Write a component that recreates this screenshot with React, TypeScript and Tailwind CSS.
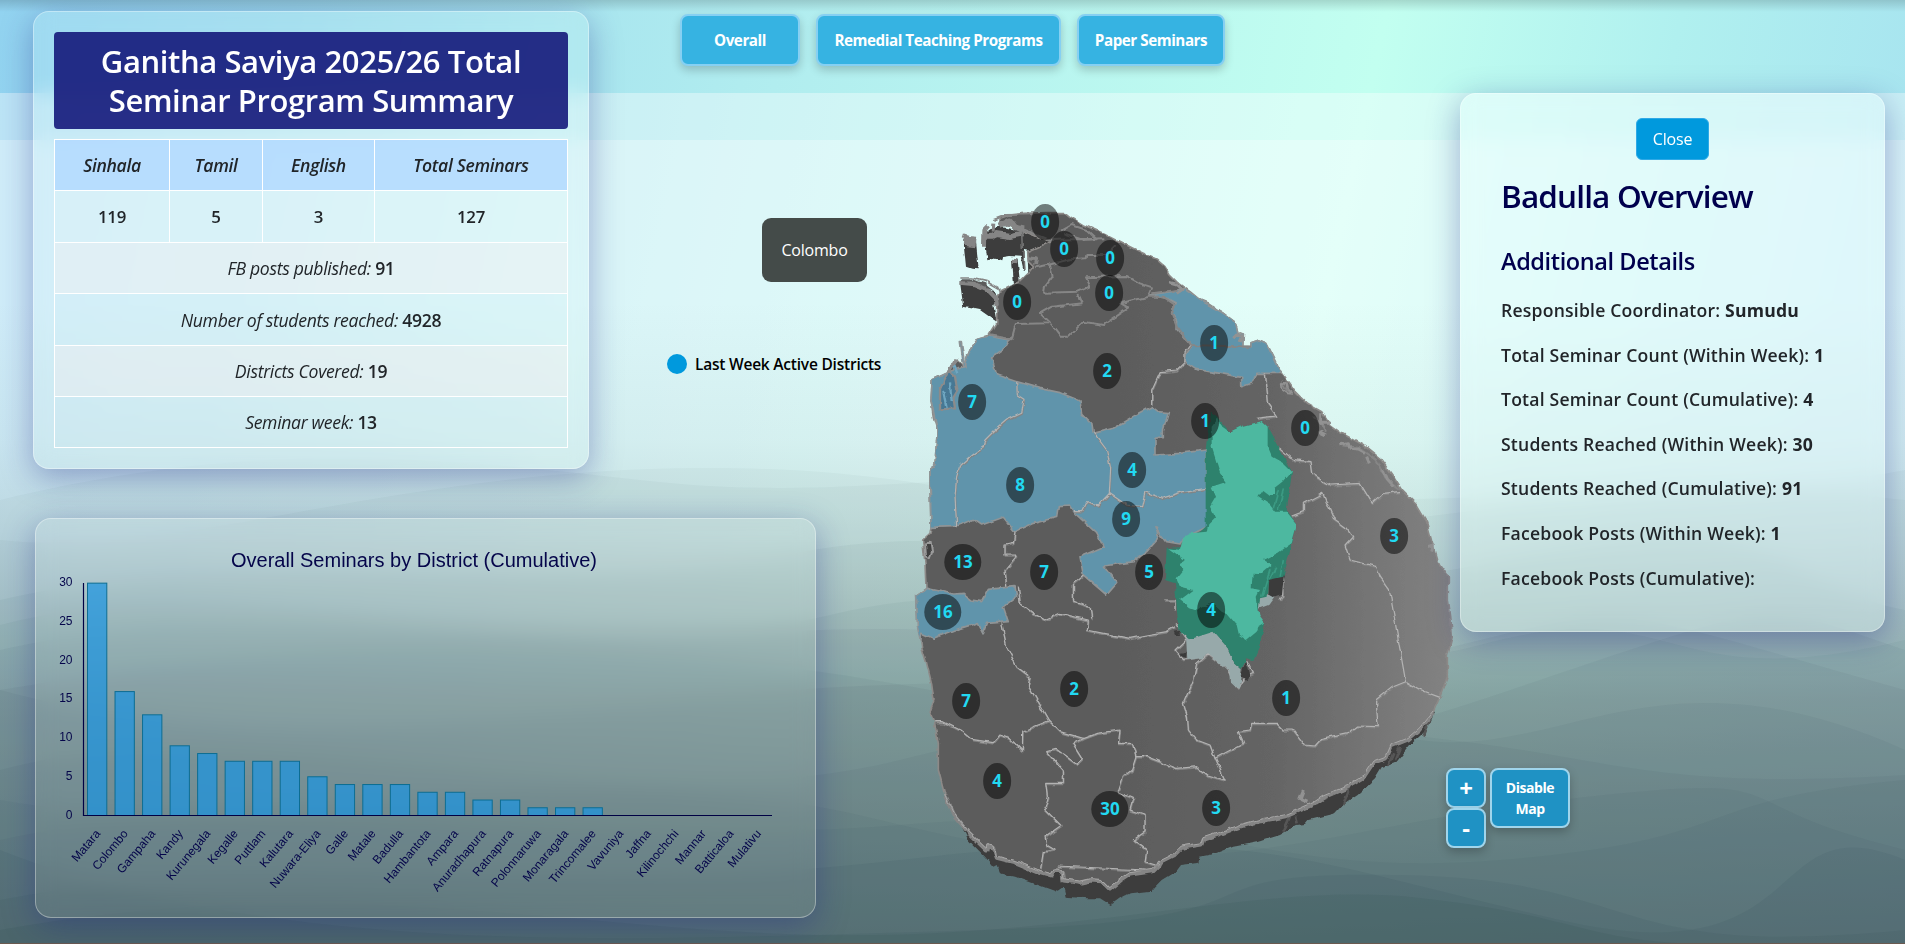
import React from "react";

const BARS: [string, number][] = [
  ["Matara", 30], ["Colombo", 16], ["Gampaha", 13], ["Kandy", 9], ["Kurunegala", 8],
  ["Kegalle", 7], ["Puttlam", 7], ["Kalutara", 7], ["Nuwara-Eliya", 5], ["Galle", 4],
  ["Matale", 4], ["Badulla", 4], ["Hambantota", 3], ["Ampara", 3], ["Anuradhapura", 2],
  ["Ratnapura", 2], ["Polonnaruwa", 1], ["Monaragala", 1], ["Trincomalee", 1], ["Vavuniya", 0],
  ["Jaffna", 0], ["Kilinochchi", 0], ["Mannar", 0], ["Batticaloa", 0], ["Mulativu", 0],
];

const BADGES: [string, number, number][] = [
  ["0", 1045, 222], ["0", 1064, 249], ["0", 1110, 258], ["0", 1017, 302], ["0", 1109, 293],
  ["2", 1107, 371], ["7", 972, 402], ["1", 1205, 421], ["1", 1214, 343], ["0", 1305, 428],
  ["3", 1394, 536], ["8", 1020, 485], ["4", 1132, 470], ["9", 1126, 519], ["13", 963, 562],
  ["7", 1044, 572], ["5", 1149, 572], ["16", 943, 612], ["4", 1211, 610], ["2", 1074, 689],
  ["7", 966, 701], ["4", 997, 781], ["30", 1110, 809], ["3", 1216, 808], ["1", 1286, 698],
];

const COAST =
  "M300 95 300 85 330 75 375 70 440 68 495 68 510 80 550 105 610 130 660 155 720 185 770 208 795 230 810 255 835 280 870 305 900 330 925 340 970 370 1010 400 1017 428 1030 432 1028 470 1053 470 1053 458 1077 450 1100 460 1120 500 1145 550 1185 605 1220 640 1265 665 1290 705 1325 730 1390 765 1440 805 1480 860 1505 900 1550 945 1580 995 1595 1050 1613 1110 1620 1125 1645 1160 1645 1230 1652 1280 1657 1340 1642 1400 1642 1460 1620 1520 1600 1565 1560 1615 1525 1645 1475 1665 1460 1700 1420 1715 1390 1760 1340 1790 1270 1820 1240 1840 1160 1875 1080 1890 1025 1905 970 1925 910 1945 905 1960 845 1970 820 1995 780 2015 775 2025 760 2040 690 2050 660 2070 630 2095 605 2070 570 2068 540 2075 490 2068 487 2045 468 2035 455 2053 410 2040 350 2015 290 2000 280 1970 262 1966 260 1978 210 1930 160 1870 135 1815 115 1740 115 1660 103 1595 90 1565 102 1530 95 1480 80 1420 65 1370 55 1310 50 1215 78 1195 75 1120 68 1050 90 1030 93 1010 90 900 90 835 105 825 112 720 100 680 93 630 97 570 150 545 170 510 190 530 210 480 235 445 268 435 290 400 290 345 285 330 300 305 360 275 385 250 400 230 385 215 383 185 440 160 450 155 375 125Z";

const WALL =
  "M1605 1565 1580 1620 1530 1665 1490 1715 1445 1732 1425 1765 1370 1815 1330 1842 1305 1870 1225 1890 1215 1902 1190 1905 1140 1935 1070 1957 1000 1970 950 1990 900 2000 895 2018 840 2025 825 2045 785 2070 765 2090 755 2102 690 2110 660 2125 632 2145 600 2125 560 2125 497 2120 490 2092 470 2105 400 2080 345 2060 300 2050 290 2025 280 2030 255 2000 205 1950 180 1900 150 1850 138 1820 300 1700 1300 1600Z";

const RIM =
  "M1600 1569 1560 1619 1525 1649 1475 1669 1460 1704 1420 1719 1390 1764 1340 1794 1270 1824 1240 1844 1160 1879 1080 1894 1025 1909 970 1929 910 1949 905 1964 845 1974 820 1999 780 2019 775 2029 760 2044 690 2054 660 2074 630 2099 605 2074 570 2072 540 2079 490 2072 487 2049 468 2039 455 2057 410 2044 350 2019 290 2004 280 1974 262 1970 260 1982 210 1934 160 1874 135 1819";

const ACTIVE = [
  "M235 445 268 438 330 450 320 468 275 500 290 555 350 575 420 595 480 608 540 632 545 670 575 700 580 730 640 715 690 685 755 650 775 665 805 668 790 720 790 740 765 745 765 795 840 790 918 780 922 1010 850 1045 840 1062 800 1055 765 1010 778 1042 740 1085 700 1115 610 1128 650 1180 620 1215 550 1155 540 1100 610 1070 590 1030 525 970 510 948 475 950 470 982 400 1000 345 1025 310 982 245 1005 220 988 165 1010 93 1012 90 835 105 825 112 720 93 630 97 570 150 545 190 530 210 480Z",
  "M750 315 810 305 850 295 900 330 970 370 1010 400 1017 430 1030 432 1028 470 1053 470 1053 458 1077 450 1100 460 1145 550 1070 550 1055 580 1025 590 1025 562 960 550 890 538 855 515 860 490 875 468 828 415 830 395 815 365 828 340 800 325Z",
  "M50 1215 80 1195 160 1212 190 1210 215 1230 245 1235 265 1198 345 1190 350 1220 310 1250 325 1295 260 1300 250 1328 235 1298 180 1315 100 1345 65 1330 62 1355 52 1310Z",
];

const BORDERS_NORTH =
  "M405 232 455 222 510 208 560 205 562 195 620 195 650 165M480 125 515 105 560 120 590 148 550 150 490 130M450 225 458 260 435 290 432 308 535 305 568 290 555 262 680 258 720 280 757 292 745 320 660 340 685 355 610 405 550 395 505 440 480 440 450 400 420 370 455 350 548 340 535 312M268 435 335 448 347 402 445 400M745 320 790 320 825 345 815 370 830 410 870 465 1053 470M757 310 830 300M280 90 320 75 400 73M300 95 375 120 450 150 610 145M1145 575 1160 600 1180 610M1325 765 1380 775 1430 810 1460 870 1500 900M1240 680 1262 700 1275 725";

const BORDERS =
  "M350 575 352 615 372 628 365 670 320 690 285 720 255 750 250 770 215 795 180 825 170 860 165 920 170 1010M580 730 590 740 620 780 632 835 628 910 595 945 560 935 545 965 525 965M628 910 680 945 725 950 735 905 785 925 850 905 918 895M870 465 855 485 855 515 830 540 780 545 755 600 755 640M1093 550 1102 640 1130 678 1070 685M1105 772 1140 775 1180 808 1230 815 1235 850 1290 885 1380 880 1417 940 1450 910 1500 905M1175 978 1210 965 1210 940 1268 910 1300 985 1335 1010 1358 1040 1335 1065 1350 1110 1430 1130 1440 1160 1468 1198 1517 1475 1560 1500 1620 1522M1517 1475 1480 1490 1430 1530 1430 1560 1435 1610 1370 1608 1345 1628 1265 1645 1245 1668 1215 1665 1180 1620 1150 1620 1130 1600 1055 1600 1050 1620 1015 1625 1030 1660 945 1705 930 1665 890 1650 865 1620 862 1580 850 1540 880 1470 890 1420 925 1390 965 1420 985 1440 1012 1497 1030 1465 1060 1450 1040 1410M945 1705 975 1770 920 1755 890 1730 830 1735 740 1700 705 1700M355 1190 360 1240 400 1270 435 1290 480 1270 565 1290 562 1320 610 1330 690 1345 740 1335 800 1325 825 1310M550 1155 520 1180 520 1230 570 1250 575 1285M345 1025 340 1060 315 1065 315 1095 352 1095 315 1140 320 1190M305 1300 320 1370 350 1430 390 1460 385 1485 445 1590 480 1625 550 1645M103 1595 130 1595 180 1620 215 1648 280 1658 300 1635 330 1645 367 1683 368 1623 445 1593M550 1645 590 1630 660 1620 655 1660 700 1660 710 1695 695 1740 670 1760 655 1805 700 1825 690 1860 735 1875 735 1925 700 1950 740 1980 735 2015 770 2025M550 1645 520 1660 548 1705 530 1723 465 1675 440 1682 490 1740 490 1780 440 1780 445 1820 435 1855 485 1905 435 1940 440 1965 465 1980 430 1985 422 2035M470 2028 740 2040M1140 1230 1148 1215 1148 1165M790 1230 825 1230 825 1260M828 1300 860 1345 825 1380 850 1408 900 1400";

const RAISED_SIDE =
  "M930 668 955 685 990 727 1030 707 1085 693 1103 710 1176 845 1160 960 1188 1000 1188 1015 1150 1160 1105 1170 1100 1220 1080 1225 1075 1275 1095 1298 1077 1370 1060 1410 1038 1405 1025 1438 1000 1415 980 1370 940 1325 870 1348 835 1320 825 1180 795 1170 800 1073 850 1072 917 1010 917 780Z";

const RAISED_TOP =
  "M955 685 960 705 990 727 1030 707 1085 693 1103 710 1103 772 1115 800 1150 820 1176 845 1150 875 1125 895 1125 915 1110 915 1090 900 1075 922 1110 945 1125 965 1160 965 1188 1000 1188 1015 1175 1060 1135 1088 1092 1110 1115 1125 1085 1150 1058 1148 1055 1195 1080 1200 1070 1220 1078 1275 1095 1298 1075 1310 1070 1325 1040 1350 1017 1335 1010 1305 985 1275 965 1265 935 1238 890 1262 870 1255 840 1230 880 1200 840 1190 830 1165 850 1140 838 1120 855 1110 805 1075 840 1080 850 1040 870 1030 920 1025 925 1000 945 980 930 950 948 920 935 890 980 875 960 850 935 770 935 710Z";

const WAVES: [string, number][] = [
  ["M0 500C250 440 420 455 640 480S960 460 1180 490 1640 470 1905 500V944H0Z", 0.03],
  ["M0 540C180 560 380 470 700 468S1100 560 1400 520 1750 500 1905 470V944H0Z", 0.03],
  ["M0 600C260 540 520 600 800 552S1200 630 1500 560 1750 580 1905 610V944H0Z", 0.045],
  ["M0 625C240 560 560 680 830 615S1280 700 1480 645 1660 700 1905 640V944H0Z", 0.045],
  ["M0 650C220 600 480 640 820 630S1240 700 1440 650 1600 605 1905 690V944H0Z", 0.05],
  ["M0 690C300 640 550 620 930 690S1300 760 1540 680 1760 600 1905 650V944H0Z", 0.05],
  ["M0 690C300 770 560 700 860 686S1280 720 1420 740 1660 640 1905 750V944H0Z", 0.05],
  ["M0 770C260 700 620 830 900 760S1280 720 1450 740 1660 790 1905 775V944H0Z", 0.05],
  ["M0 800C280 850 560 740 880 820S1300 830 1560 800 1700 800 1905 850V944H0Z", 0.05],
  ["M0 840C280 780 600 850 900 825S1250 880 1500 860 1680 800 1905 780V944H0Z", 0.05],
  ["M0 900C260 850 560 900 900 860S1300 860 1560 920 1760 800 1905 860V944H0Z", 0.07],
  ["M0 850C280 960 640 940 980 930S1150 870 1400 875 1600 960 1905 930V944H0Z", 0.07],
  ["M0 930C340 870 560 930 820 935S1260 880 1420 898 1580 940 1700 944H0Z", 0.09],
];

const DETAILS: [string, string][] = [
  ["Responsible Coordinator:", "Sumudu"],
  ["Total Seminar Count (Within Week):", "1"],
  ["Total Seminar Count (Cumulative):", "4"],
  ["Students Reached (Within Week):", "30"],
  ["Students Reached (Cumulative):", "91"],
  ["Facebook Posts (Within Week):", "1"],
  ["Facebook Posts (Cumulative):", ""],
];

const SUMMARY: [string, string, string][] = [
  ["FB posts published:", "91", "bg-[#fff0f0]/30"],
  ["Number of students reached:", "4928", ""],
  ["Districts Covered:", "19", "bg-[#fff0f0]/30"],
  ["Seminar week:", "13", ""],
];

function Backdrop() {
  return (
    <div className="absolute inset-0 overflow-hidden bg-[linear-gradient(102deg,#92d3f0_0%,#9cdaee_14%,#b0ecef_36%,#c2fff0_66%,#b0f0ef_80%,#a2ddf0_100%)]">
      <div className="absolute inset-x-0 top-[93px] bottom-0 bg-white/38" />
      <div className="absolute inset-x-0 top-[140px] bottom-0 bg-white/28" />
      <div className="absolute inset-0 bg-[linear-gradient(180deg,rgba(80,106,102,0)_300px,rgba(80,106,102,0.06)_440px,rgba(80,106,102,0.15)_520px,rgba(80,106,102,0.3)_620px,rgba(80,106,102,0.44)_700px,rgba(80,106,102,0.54)_800px,rgba(80,106,102,0.66)_944px)]" />
      <svg className="absolute inset-0" width="1905" height="944" viewBox="0 0 1905 944">
        {WAVES.map(([d, o], i) => (
          <path key={i} d={d} fill="#203f46" fillOpacity={o} />
        ))}
      </svg>
      <div className="absolute inset-x-0 top-0 h-3 bg-gradient-to-b from-black/15 to-transparent" />
      <div className="absolute inset-x-0 bottom-0 h-px bg-[#6a5a50]" />
    </div>
  );
}

function DistrictMap() {
  return (
    <div className="absolute inset-0">
      <svg className="absolute top-[190px] left-[900px]" width="600" height="740" viewBox="0 0 1800 2220">
        <defs>
          <linearGradient id="land" gradientUnits="userSpaceOnUse" x1="600" y1="0" x2="1660" y2="0">
            <stop offset="0" stopColor="#5b5b5b" />
            <stop offset="0.5" stopColor="#656565" />
            <stop offset="1" stopColor="#838383" />
          </linearGradient>
          <filter id="rough" x="-5%" y="-5%" width="110%" height="110%">
            <feTurbulence type="fractalNoise" baseFrequency="0.035" numOctaves="2" seed="4" />
            <feDisplacementMap in="SourceGraphic" scale="15" xChannelSelector="R" yChannelSelector="G" />
          </filter>
        </defs>
        <g filter="url(#rough)" strokeLinejoin="round">
          <g fill="#3c3c3c">
            <path d="M190 150 228 155 236 238 215 236 198 230Z" />
            <path d="M252 130 268 118 300 110 372 125 450 155 385 182 372 180 376 240 370 238 362 200 330 198 306 202 304 214 268 206 262 208Z" />
            <path d="M180 275 235 278 285 305 294 330 280 345 290 395 240 360 190 350Z" />
            <path d="M336 210 353 210 360 280 342 285Z" />
            <path d="M383 200 405 210 405 240 385 250Z" />
          </g>
          <path d={WALL} fill="#3d3d3d" />
          <path d="M1590 1590 1570 1640M1480 1690 1465 1725M1500 1670 1485 1710M1350 1790 1330 1842M1170 1880 1150 1925M1185 1880 1190 1900" stroke="#565656" strokeWidth="8" fill="none" />
          <path d={COAST} fill="url(#land)" stroke="#8d8a88" strokeWidth="5" />
          <path d={RIM} fill="none" stroke="#858585" strokeWidth="11" />
          <path d={RIM} fill="none" stroke="#adadad" strokeWidth="2.5" transform="translate(-1 -6)" />
          <g fill="none" stroke="#858585">
            <path strokeWidth="24" d="M190 155 228 160" />
            <path strokeWidth="12" d="M190 139 205 144 228 146M338 212 352 214M385 205 408 208 405 225M252 170 253 118 262 108M278 125 280 98" />
            <path strokeWidth="18" d="M256 140 275 140 290 132 330 138 370 130M300 108 330 92 345 112 372 118" />
            <path strokeWidth="13" d="M178 278 225 282 262 298 288 325 290 350" />
            <path strokeWidth="5" d="M178 264 215 264 260 275 295 295 298 308" />
            <path strokeWidth="5" d="M365 125 367 175M372 185 374 238" stroke="#707070" />
          </g>
          <path d="M182 268 215 268 255 280 285 302 262 292 225 276 184 274Z" fill="#5b5b5b" />
          <g fill="#6094ab" stroke="#8f9496" strokeWidth="5">
            {ACTIVE.map((d) => <path key={d} d={d} />)}
            <path d="M178 455 184 455 195 530 188 530Z" />
          </g>
          <path d={BORDERS_NORTH} fill="none" stroke="#868686" strokeWidth="6" />
          <path d={BORDERS} fill="none" stroke="#838383" strokeWidth="5" transform="translate(1 3)" />
          <path d={BORDERS} fill="none" stroke="#b3b3b3" strokeWidth="3.5" />
          <path d="M120 600 135 565 150 545 165 560 172 600 160 620 165 655 120 658Z" fill="#467894" stroke="#8b8b8b" strokeWidth="7" />
          <path d="M130 605 140 655M150 580 155 630M160 520 172 550" stroke="#6fa6c0" strokeWidth="7" />
          <path d="M145 548 152 530 165 520 168 505" stroke="#8b8b8b" strokeWidth="10" fill="none" />
          <path d="M1000 445 1012 432 1028 440 1020 456M812 280 830 285 845 300 830 310M1318 765 1345 758 1350 778 1375 780 1395 790M1400 800 1408 820M1450 840 1462 870 1480 890M1582 1070 1600 1065 1595 1085M1210 1800 1200 1825 1222 1835M1262 670 1262 700 1290 700M1255 725 1275 735" stroke="#929292" strokeWidth="9" fill="none" />
          <path d="M1145 580 1158 578 1162 595 1180 612 1165 610 1148 598Z" fill="none" stroke="#929292" strokeWidth="5" />
          <path d="M75 1060 92 1058 96 1085 88 1105 78 1100Z" fill="#404040" stroke="#9a9a9a" strokeWidth="6" />
          <g fill="#97a9aa">
            <path d="M858 1340 935 1318 980 1370 1000 1415 1025 1438 1016 1500 990 1475 988 1445 955 1415 925 1390 905 1405 862 1410Z" />
            <path d="M1073 1257 1078 1225 1110 1205 1122 1222 1105 1245Z" />
          </g>
          <path d="M1103 1210 1103 1165 1152 1150 1146 1215 1125 1222ZM1022 1460 1038 1410 1050 1455 1040 1470ZM840 1388 860 1385 858 1403 842 1398ZM824 1325 838 1322 840 1336 828 1335ZM918 840 932 850 925 930Z" fill="#3b3b3b" />
          <path d={RAISED_SIDE} fill="#2f826d" />
          <path d={RAISED_TOP} fill="#4db8a0" />
          <path d="M1150 895 1135 960M1135 900 1120 955M1110 1140 1085 1220M1130 1130 1112 1165M1150 1110 1140 1160" stroke="#3b9a83" strokeWidth="5" />
        </g>
      </svg>
      {BADGES.map(([n, x, y], i) => (
        <div key={i} className="absolute flex -translate-x-1/2 -translate-y-1/2" style={{ left: x, top: y }}>
          <span className="flex h-9 items-center rounded-[50%] bg-black/50 px-[9px] text-[17px] font-bold text-[#22d9f2]">{n}</span>
        </div>
      ))}
    </div>
  );
}

function SeminarChart() {
  return (
    <svg width="779" height="398" viewBox="1 1 779 398" fontFamily="'Liberation Sans', Arial, sans-serif" fill="#05054a">
      <text x="379" y="49" fontSize="20" textAnchor="middle" textLength="366">Overall Seminars by District (Cumulative)</text>
      {[0, 5, 10, 15, 20, 25, 30].map((v) => (
        <text key={v} x="37.5" y={300.5 - v * 7.745} fontSize="12" textAnchor="end">{v}</text>
      ))}
      {BARS.map(([name, v], i) => {
        const x = 48.5 + i * 27.53;
        return (
          <g key={name}>
            {v > 0 && (
              <rect x={x + 4} y={297.5 - v * 7.745} width="19.3" height={v * 7.745} fill="#1c94e0" fillOpacity="0.72" stroke="#0d6d92" strokeWidth="1" />
            )}
            <text fontSize="12" textAnchor="end" transform={`translate(${x + 17.5} 316) rotate(-50)`}>{name}</text>
          </g>
        );
      })}
      <path d="M48.5 65V297.5H737" fill="none" stroke="#000044" strokeWidth="1.2" />
    </svg>
  );
}

const GLASS = "border border-white/35 shadow-[0_8px_32px_rgba(31,38,135,0.37)] backdrop-blur-[10px]";
const NAV = "h-[52px] rounded-lg border-2 border-[#86d0f2] bg-[#36b3e2] pt-px text-[15.2px] font-bold tracking-[-0.45px] text-white shadow-[0_4px_10px_rgba(0,0,0,0.2)]";
const CTRL = "rounded-lg border-2 border-[#a0d5ec] bg-[#1f92c4] font-bold text-white shadow-[0_4px_10px_rgba(0,0,0,0.22)]";

export default function App() {
  return (
    <div className="relative h-[944px] w-[1905px] overflow-hidden font-['Open_Sans','Noto_Sans',sans-serif] text-[#212529]">
      <Backdrop />
      <DistrictMap />
      <div className="relative flex h-full">
        <div className="flex w-[1460px] flex-col">
          <div className="flex h-[518px] items-start">
            <section className={`mt-[11px] ml-[33px] w-[556px] rounded-[16px] bg-[#e0fff8]/15 p-5 ${GLASS}`}>
              <h1 className="flex h-[97px] items-center justify-center rounded-[4px] bg-[#14187a]/90 text-center text-[31px] leading-[38.4px] font-semibold tracking-[-0.4px] text-white">
                Ganitha Saviya 2025/26 Total<br />Seminar Program Summary
              </h1>
              <table className="mt-[10px] w-full table-fixed border-collapse text-center text-[17.6px] tracking-[-0.32px]">
                <colgroup>
                  <col className="w-[115px]" /><col className="w-[93px]" /><col className="w-[112px]" /><col />
                </colgroup>
                <tbody>
                  <tr className="h-[51.4px] bg-[#b0d8ff]/80 italic">
                    {["Sinhala", "Tamil", "English", "Total Seminars"].map((h) => (
                      <th key={h} className="border border-white font-semibold">{h}</th>
                    ))}
                  </tr>
                  <tr className="h-[51.4px] bg-white/10 font-semibold">
                    {["119", "5", "3", "127"].map((h) => (
                      <td key={h} className="border border-white text-[16.8px]">{h}</td>
                    ))}
                  </tr>
                  {SUMMARY.map(([k, v, bg]) => (
                    <tr key={k} className={`h-[51.4px] ${bg}`}>
                      <td colSpan={4} className="border border-white pt-px">
                        <em>{k}</em> <span className="font-semibold">{v}</span>
                      </td>
                    </tr>
                  ))}
                </tbody>
              </table>
            </section>
            <div className="ml-[91px] flex flex-col">
              <nav className="mt-[14px] flex gap-4">
                <button className={`w-[120px] ${NAV}`}>Overall</button>
                <button className={`w-[245px] ${NAV}`}>Remedial Teaching Programs</button>
                <button className={`w-[148px] ${NAV}`}>Paper Seminars</button>
              </nav>
              <div className="mt-[152px] ml-[82px] flex h-16 w-[105px] items-center justify-center rounded-[9px] bg-[#444b49] text-[16px] tracking-[-0.2px] text-white">Colombo</div>
              <div className="mt-[72px] -ml-[13px] flex items-center gap-2">
                <span className="size-5 rounded-full bg-[#0099dd]" />
                <span className="text-[15.5px] leading-5 font-semibold tracking-[-0.22px] text-black">Last Week Active Districts</span>
              </div>
            </div>
          </div>
          <section className={`ml-[35px] h-[400px] w-[781px] rounded-[16px] bg-white/8 ${GLASS}`}>
            <SeminarChart />
          </section>
        </div>
        <div className="flex w-[425px] flex-col">
          <aside className={`mt-[93px] flex h-[539px] flex-col rounded-[16px] bg-[#eaffff]/35 px-10 pt-6 ${GLASS}`}>
            <button className="mx-auto h-[42px] w-[73px] rounded-md border border-[#2fa9e6] bg-[#0099dd] text-[16px] tracking-[-0.2px] text-white">Close</button>
            <h2 className="mt-[17px] text-[31.5px] leading-[38px] font-semibold tracking-[-0.85px] text-[#00004d]">Badulla Overview</h2>
            <h3 className="mt-[30px] text-[23.5px] leading-8 font-semibold tracking-[-0.4px] text-[#00004d]">Additional Details</h3>
            <div className="mt-[21px] flex flex-col gap-[20.6px]">
              {DETAILS.map(([k, v]) => (
                <p key={k} className="text-[17.6px] leading-6 font-semibold tracking-[0.2px] whitespace-nowrap">{k} <b className="font-bold">{v}</b></p>
              ))}
            </div>
          </aside>
          <div className="mt-[136px] -ml-[14px] flex items-start gap-1">
            <div className="flex flex-col">
              <button className={`size-10 text-[24px] leading-none ${CTRL}`}>+</button>
              <button className={`size-10 text-[24px] leading-none ${CTRL}`}>-</button>
            </div>
            <button className={`h-[60px] w-20 text-[14px] leading-[21px] tracking-[-0.45px] ${CTRL}`}>Disable<br />Map</button>
          </div>
        </div>
      </div>
    </div>
  );
}
